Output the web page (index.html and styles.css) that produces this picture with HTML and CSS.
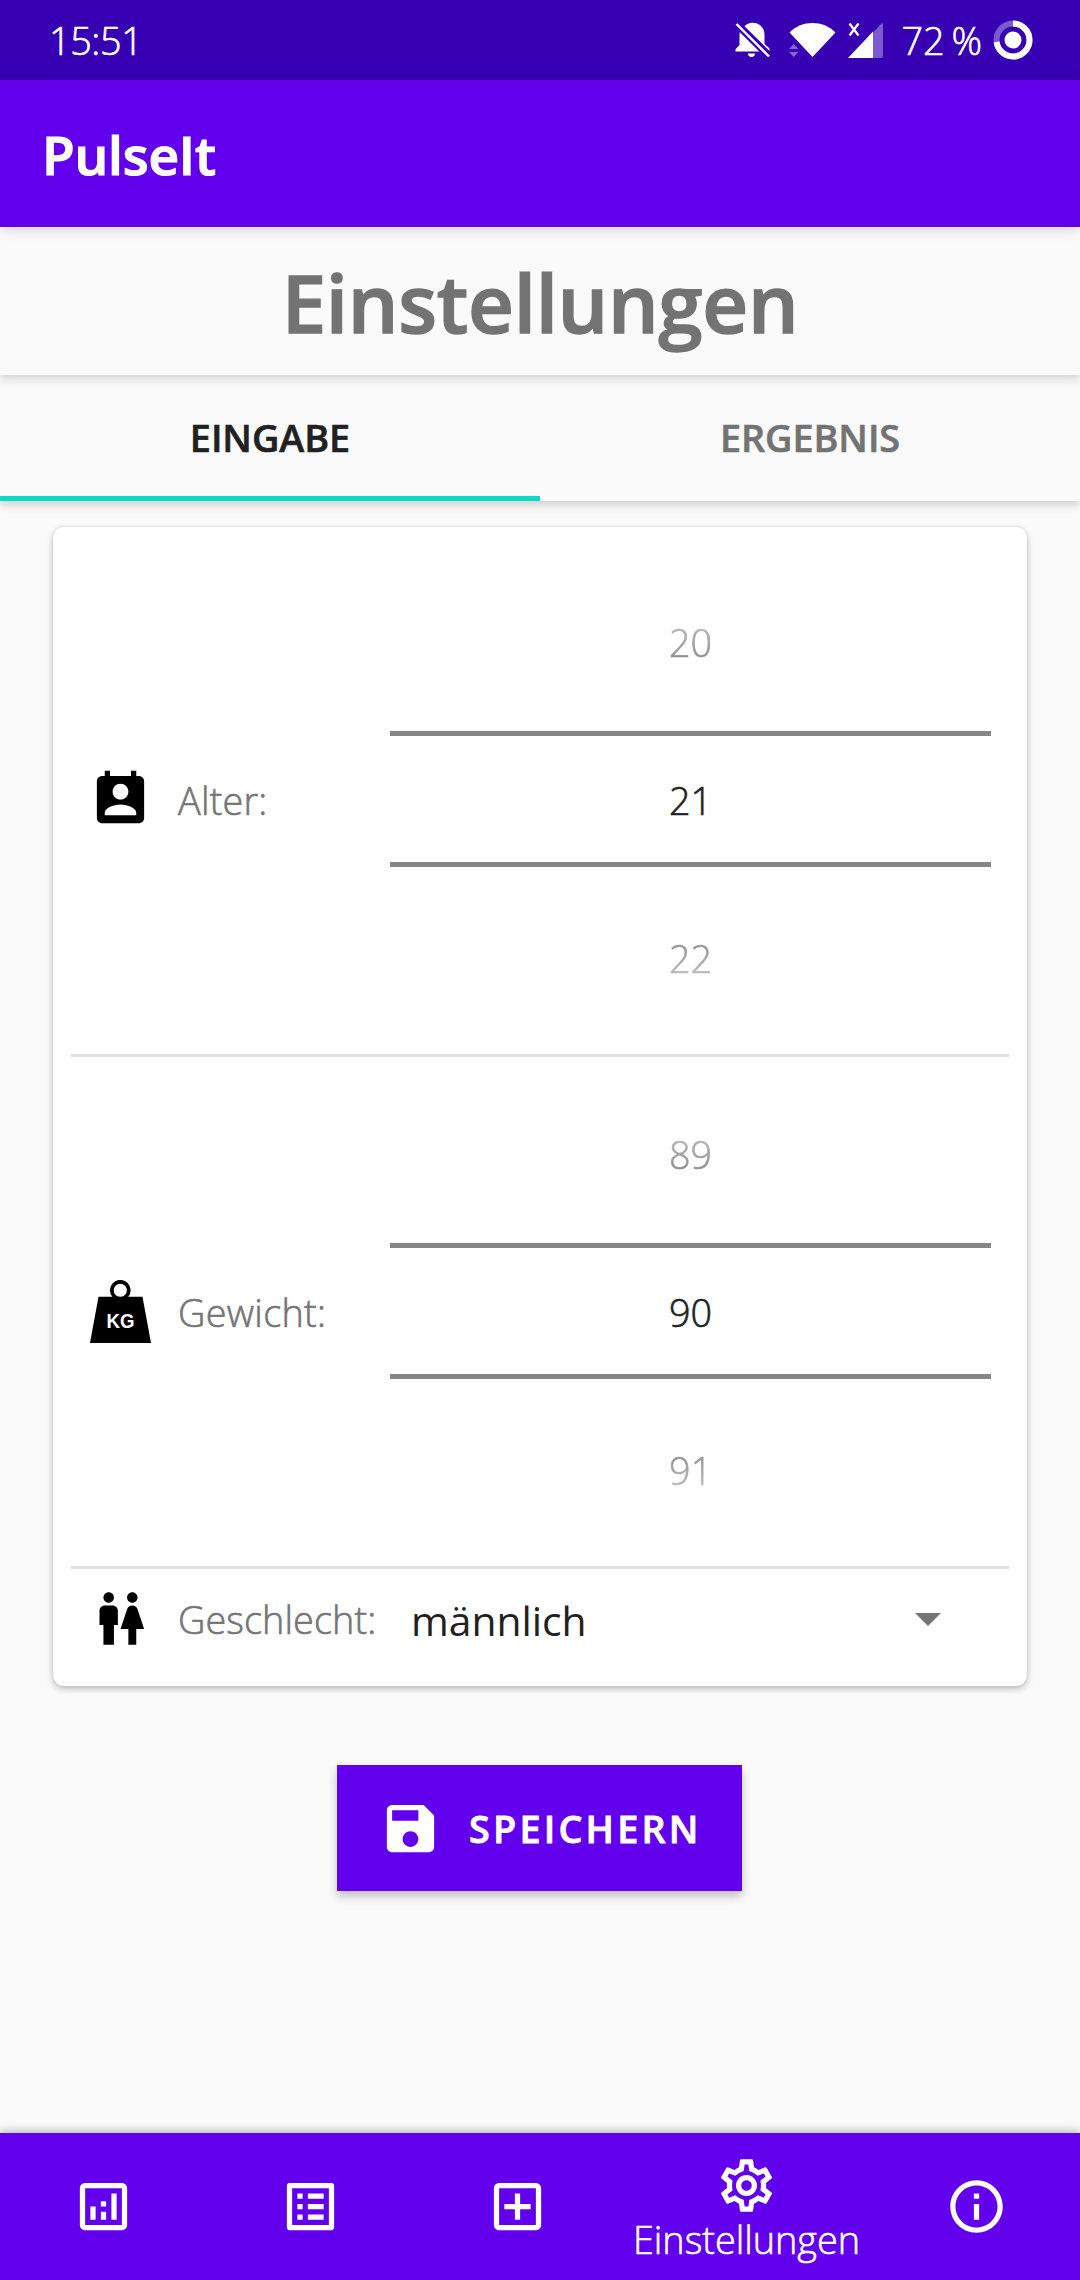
FILE: index.html
```html
<!DOCTYPE html>
<html lang="de">
<head>
<meta charset="utf-8">
<title>PulseIt</title>
<link rel="stylesheet" href="styles.css">
</head>
<body>
<div class="screen">
  <header class="status-bar">
    <span class="clock">15:51</span>
    <div class="status-icons">
      <svg class="icon-bell" width="36" height="36" viewBox="0 0 36 36">
        <path fill="#fff" d="M16.500 35c-2 0-3.600-1.600-3.600-3.600h7.200c0 2-1.600 3.600-3.600 3.600zM.5 29.500v-2.300l4-4.200V12.500c0-1 .2-2 .6-3L26.500 29.500zM9.500 4.200C11.500 2 14.300.8 17.300.8 24.500.8 29.500 6 29.500 12.500V22l5 4.500V28.500h-.5z"/>
        <path d="M1.500 2.500L33.500 34.500" stroke="#3700b3" stroke-width="6"/>
        <path d="M1.500 2L34 34.500" stroke="#fff" stroke-width="2.400"/>
      </svg>
      <svg class="icon-wifi" width="47" height="36" viewBox="0 0 47 36">
        <path fill="#fff" d="M.5 10.500C7 4 15 1 23.500 1S40 4 46.500 10.500L23.500 35z"/>
        <path fill="#fff" fill-opacity=".4" d="M0 27l4.700-5 4.700 5zM0 30h9.400l-4.700 5z"/>
      </svg>
      <svg class="icon-signal" width="36" height="36" viewBox="0 0 36 36">
        <path fill="#fff" fill-opacity=".35" d="M25 10.500L33.500 1.500Q35 .5 35 2.500V34q0 2-2 2h-8z"/>
        <path fill="#fff" d="M25 9.500V36H0z"/>
        <path d="M1.500 1.500L10.500 13.500M10.500 1.500L1.500 13.500" stroke="#fff" stroke-width="2.300"/>
      </svg>
      <span class="battery-level">72 %</span>
      <svg class="icon-battery" width="40" height="40" viewBox="0 0 40 40">
        <circle cx="20" cy="20" r="16.500" fill="none" stroke="#fff" stroke-opacity=".35" stroke-width="6"/>
        <circle cx="20" cy="20" r="16.500" fill="none" stroke="#fff" stroke-width="6" pathLength="100" stroke-dasharray="73 100" transform="rotate(-90 20 20)"/>
        <circle cx="20" cy="20" r="8.500" fill="#fff"/>
      </svg>
    </div>
  </header>

  <div class="app-bar">PulseIt</div>
  <h1 class="page-title">Einstellungen</h1>

  <nav class="tabs">
    <a class="tab tab-active">EINGABE</a>
    <a class="tab">ERGEBNIS</a>
  </nav>

  <main class="content">
    <section class="card">
      <div class="row row-picker">
        <svg class="row-icon" viewBox="0 0 24 24"><path d="M19 3h-1V1h-2v2H8V1H6v2H5c-1.110 0-2 .9-2 2v14c0 1.100.890 2 2 2h14c1.100 0 2-.9 2-2V5c0-1.100-.9-2-2-2zm-7 3c1.660 0 3 1.340 3 3s-1.340 3-3 3-3-1.340-3-3 1.340-3 3-3zm6 12H6v-1c0-2 4-3.100 6-3.100s6 1.100 6 3.100v1z"/></svg>
        <span class="label label-age">Alter:</span>
        <div class="picker">
          <span class="value value-prev">20</span>
          <span class="value value-current">21</span>
          <span class="value value-next">22</span>
        </div>
      </div>
      <hr class="divider">
      <div class="row row-picker">
        <svg class="row-icon" viewBox="0 0 63 63">
          <circle cx="31.300" cy="10.300" r="8.500" fill="none" stroke="#000" stroke-width="3.800"/>
          <path d="M9.500 16.700H53.500L62 63H1z"/>
          <text class="kg" x="17.600" y="47.500" textLength="28" lengthAdjust="spacingAndGlyphs">KG</text>
        </svg>
        <span class="label label-weight">Gewicht:</span>
        <div class="picker">
          <span class="value value-prev">89</span>
          <span class="value value-current">90</span>
          <span class="value value-next">91</span>
        </div>
      </div>
      <hr class="divider">
      <div class="row row-gender">
        <svg class="row-icon" viewBox="0 0 24 24"><path d="M5.500 22v-7.500H4V9c0-1.100.9-2 2-2h3c1.100 0 2 .9 2 2v5.500H9.500V22h-4zM18 22v-6h3l-2.540-7.630C18.180 7.550 17.420 7 16.560 7h-.12c-.86 0-1.630.550-1.900 1.370L12 16h3v6h3zM7.500 6c1.110 0 2-.890 2-2s-.890-2-2-2-2 .890-2 2 .890 2 2 2zm9 0c1.110 0 2-.890 2-2s-.890-2-2-2-2 .890-2 2 .890 2 2 2z"/></svg>
        <span class="label label-gender">Geschlecht:</span>
        <div class="select">
          <span>männlich</span>
          <svg width="26" height="13" viewBox="0 0 26 13"><path fill="#757575" d="M0 0h26L13 13z"/></svg>
        </div>
      </div>
    </section>

    <button class="save">
      <svg width="63" height="63" viewBox="0 0 24 24"><path fill="#fff" d="M17 3H5c-1.110 0-2 .9-2 2v14c0 1.100.890 2 2 2h14c1.100 0 2-.9 2-2V7l-4-4zm-5 16c-1.660 0-3-1.340-3-3s1.340-3 3-3 3 1.340 3 3-1.340 3-3 3zm3-10H5V5h10v4z"/></svg>
      <span>SPEICHERN</span>
    </button>
  </main>

  <nav class="bottom-nav">
    <a class="nav-item"><svg viewBox="0 0 24 24"><path fill-rule="evenodd" d="M19 3H5c-1.100 0-2 .9-2 2v14c0 1.100.9 2 2 2h14c1.100 0 2-.9 2-2V5c0-1.100-.9-2-2-2zm0 16H5V5h14v14zM7 12h2v5H7zM15 7h2v10h-2zM11 14h2v3h-2zM11 10h2v2h-2z"/></svg></a>
    <a class="nav-item"><svg viewBox="0 0 24 24"><path fill-rule="evenodd" d="M19 5v14H5V5h14m1.100-2H3.900c-.5 0-.9.400-.9.900v16.200c0 .4.400.9.900.9h16.200c.4 0 .9-.5.900-.9V3.900c0-.5-.5-.9-.9-.9zM11 7h6v2h-6V7zm0 4h6v2h-6v-2zm0 4h6v2h-6zM7 7h2v2H7zm0 4h2v2H7zm0 4h2v2H7z"/></svg></a>
    <a class="nav-item"><svg viewBox="0 0 24 24"><path d="M19 3H5c-1.110 0-2 .9-2 2v14c0 1.100.890 2 2 2h14c1.100 0 2-.9 2-2V5c0-1.100-.9-2-2-2zm0 16H5V5h14v14zm-8-2h2v-4h4v-2h-4V7h-2v4H7v2h4z"/></svg></a>
    <a class="nav-item nav-active"><svg viewBox="0 0 24 24"><path d="M19.430 12.980c.040-.320.070-.640.070-.980 0-.340-.030-.660-.070-.980l2.110-1.650c.190-.150.240-.420.120-.640l-2-3.460c-.090-.160-.260-.250-.440-.250-.060 0-.120.010-.170.030l-2.490 1c-.520-.4-1.080-.730-1.690-.980l-.380-2.650C14.460 2.180 14.250 2 14 2h-4c-.250 0-.460.180-.490.420l-.380 2.650c-.610.250-1.170.590-1.690.980l-2.490-1c-.060-.020-.120-.030-.180-.030-.170 0-.340.090-.430.250l-2 3.460c-.130.220-.070.490.120.640l2.110 1.650c-.040.320-.070.650-.070.980 0 .330.030.660.070.980l-2.110 1.650c-.190.150-.240.420-.120.640l2 3.460c.090.160.260.250.440.250.060 0 .120-.010.170-.030l2.490-1c.520.4 1.080.730 1.690.980l.380 2.650c.030.240.240.420.490.420h4c.250 0 .460-.180.490-.420l.380-2.650c.610-.250 1.170-.590 1.690-.980l2.490 1c.060.020.120.030.180.030.170 0 .340-.090.430-.250l2-3.460c.120-.220.070-.490-.120-.640l-2.110-1.650zm-1.980-1.710c.040.310.050.520.050.730 0 .210-.020.430-.050.730l-.140 1.130.890.700 1.080.840-.7 1.210-1.270-.510-1.040-.420-.9.680c-.430.320-.840.560-1.250.730l-1.060.430-.160 1.130-.2 1.350h-1.400l-.190-1.350-.160-1.130-1.060-.430c-.430-.180-.830-.410-1.230-.710l-.910-.7-1.060.430-1.270.510-.7-1.210 1.080-.840.890-.7-.140-1.130c-.030-.310-.050-.540-.050-.740s.020-.430.050-.730l.140-1.130-.890-.7-1.080-.840.7-1.210 1.270.510 1.040.420.9-.680c.430-.320.840-.560 1.250-.730l1.060-.430.160-1.130.2-1.350h1.390l.190 1.350.160 1.130 1.060.430c.430.180.830.410 1.230.710l.910.7 1.060-.430 1.270-.510.7 1.210-1.070.850-.890.700.140 1.130zM12 8c-2.210 0-4 1.790-4 4s1.790 4 4 4 4-1.790 4-4-1.790-4-4-4zm0 6c-1.100 0-2-.9-2-2s.9-2 2-2 2 .9 2 2-.9 2-2 2z"/></svg><span>Einstellungen</span></a>
    <a class="nav-item"><svg viewBox="0 0 24 24"><path d="M11 7h2v2h-2zm0 4h2v6h-2zm1-9C6.480 2 2 6.480 2 12s4.480 10 10 10 10-4.480 10-10S17.520 2 12 2zm0 18c-4.410 0-8-3.590-8-8s3.590-8 8-8 8 3.590 8 8-3.590 8-8 8z"/></svg></a>
  </nav>
</div>
</body>
</html>
```
FILE: styles.css
```css
* { box-sizing: border-box; }

body {
  margin: 0;
  font-family: "Open Sans", "Noto Sans", sans-serif;
  font-size: 37.8px;
  font-weight: 300;
  background: #fafafa;
  -webkit-text-stroke: .6px currentColor;
}

svg { display: block; flex: none; }

.screen {
  display: flex;
  flex-direction: column;
  width: 1080px;
  height: 2280px;
  overflow: hidden;
}

/* Status bar */
.status-bar {
  display: flex;
  align-items: center;
  justify-content: space-between;
  height: 80px;
  padding: 0 47px 0 49px;
  background: #3700b3;
  color: #fff;
}
.clock { letter-spacing: -.4px; }
.status-icons { display: flex; align-items: center; }
.icon-bell { margin-right: 18px; }
.icon-wifi { margin-right: 12px; }
.icon-signal { margin-right: 18px; }
.battery-level { margin-right: 11px; word-spacing: -3px; }

/* Headings */
.app-bar {
  display: flex;
  align-items: center;
  height: 147px;
  padding: 2px 0 0 42px;
  background: #6200ee;
  color: #fff;
  font-size: 53.2px;
  font-weight: 600;
  -webkit-text-stroke-width: 1.2px;
  letter-spacing: -.2px;
  position: relative;
  z-index: 3;
  box-shadow: 0 3px 12px rgba(0, 0, 0, .15);
}
.page-title {
  display: flex;
  align-items: center;
  justify-content: center;
  height: 148px;
  margin: 0;
  padding-top: 2px;
  background: #fafafa;
  color: #737373;
  font-size: 79.8px;
  font-weight: 600;
  -webkit-text-stroke-width: 1.4px;
  letter-spacing: -.3px;
  position: relative;
  z-index: 2;
  box-shadow: 0 3px 10px rgba(0, 0, 0, .18);
}

/* Tabs */
.tabs {
  display: flex;
  height: 126px;
  position: relative;
  z-index: 1;
  background: #fafafa;
  box-shadow: 0 3px 10px rgba(0, 0, 0, .2);
}
.tab {
  flex: 1;
  display: flex;
  align-items: center;
  justify-content: center;
  padding: 5px 0 6px;
  color: #737373;
  font-weight: 600;
  letter-spacing: -.05px;
}
.tab-active {
  padding-bottom: 1px;
  border-bottom: 5px solid #0bdac6;
  color: #212121;
}

.content {
  flex: 1;
  display: flex;
  flex-direction: column;
  align-items: center;
  padding-top: 26px;
}

/* Input card */
.card {
  width: 974px;
  height: 1159px;
  padding: 18px;
  border-radius: 11px;
  background: #fff;
  box-shadow: 0 3px 7px rgba(0, 0, 0, .24), 0 0 3px rgba(0, 0, 0, .1);
}
.row { display: flex; align-items: center; padding-left: 18px; }
.row-picker { height: 509px; padding-top: 17px; padding-bottom: 18px; }
.row-gender { height: 99px; }
.row-icon { width: 63px; height: 63px; margin-right: 26px; }
.kg {
  fill: #fff;
  font-family: "Liberation Sans", Arial, sans-serif;
  font-size: 21px;
  font-weight: 700;
}
.label { width: 212px; padding-top: 2px; color: #757575; white-space: nowrap; }
.label-age { letter-spacing: .2px; }
.label-weight { letter-spacing: .3px; }
.label-gender { width: 233px; letter-spacing: .1px; }
.divider { height: 3px; margin: 0; border: 0; background: #e0e0e0; }

/* Number picker */
.picker {
  display: flex;
  flex-direction: column;
  width: 601px;
  color: #212121;
}
.value {
  display: flex;
  align-items: center;
  justify-content: center;
  height: 158px;
  padding-top: 2px;
}
.value-current {
  height: 136px;
  margin: 11px 0;
  border-top: 5px solid #868686;
  border-bottom: 5px solid #868686;
}
.value-prev { mask-image: linear-gradient(to bottom, transparent 10px, #000 180px); }
.value-next { mask-image: linear-gradient(to top, transparent 10px, #000 180px); }

/* Gender select */
.select {
  flex: 1;
  display: flex;
  align-items: center;
  justify-content: space-between;
  padding: 2px 68px 0 0;
  color: #212121;
  font-size: 40.8px;
  font-weight: 400;
  -webkit-text-stroke-width: 0;
}

/* Save button */
.save {
  display: flex;
  align-items: center;
  width: 405px;
  height: 126px;
  margin: 79px 1px 0 0;
  padding: 0 0 0 42px;
  border: 0;
  background: #6200ee;
  color: #fff;
  font: inherit;
  font-weight: 600;
  -webkit-text-stroke: .8px currentColor;
  letter-spacing: 3.2px;
  box-shadow: 0 5px 9px rgba(0, 0, 0, .24);
}
.save span { margin-left: 27px; }

/* Bottom navigation */
.bottom-nav {
  display: grid;
  grid-template-columns: 207px 207px 207px 251px 208px;
  height: 147px;
  background: #6200ee;
  color: #fff;
  box-shadow: 0 -1px 10px rgba(0, 0, 0, .32);
}
.nav-item {
  display: flex;
  flex-direction: column;
  align-items: center;
  justify-content: center;
}
.nav-item svg { width: 63px; height: 63px; fill: #fff; }
.nav-active { justify-content: flex-start; padding-top: 21px; }
.nav-active span {
  margin-top: -2px;
  font-size: 37.8px;
  line-height: 50px;
  letter-spacing: 0;
}
```
